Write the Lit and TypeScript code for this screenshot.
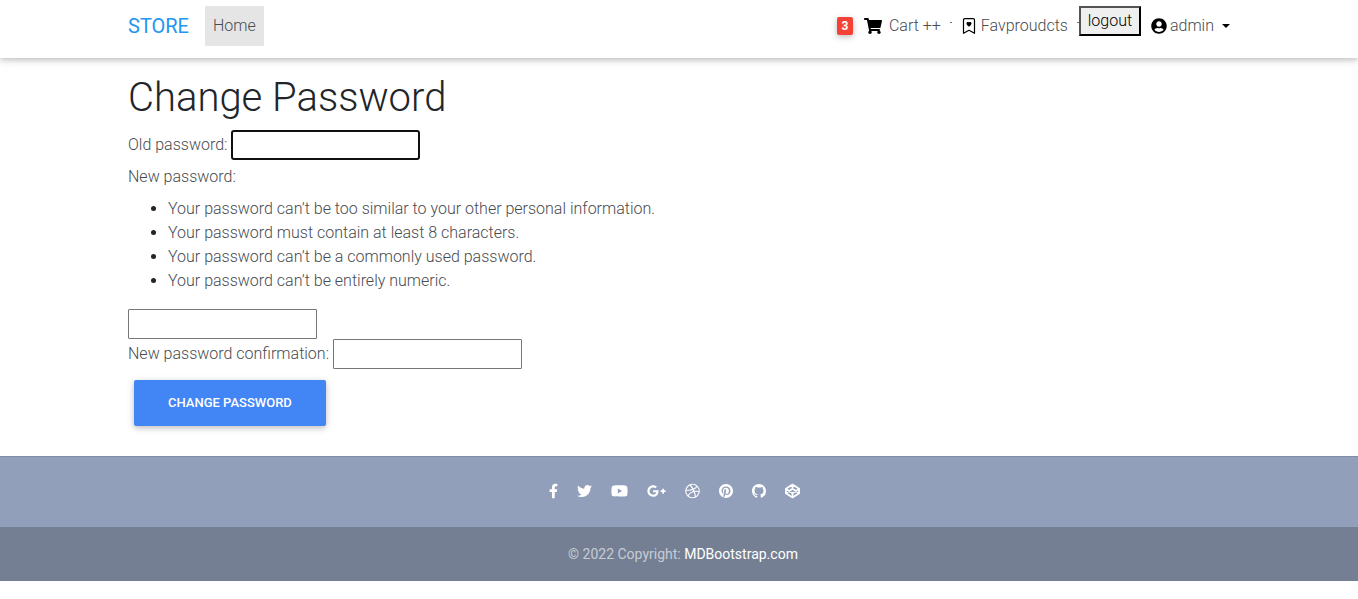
import { LitElement, html, css, svg } from "lit";
import { customElement, query } from "lit/decorators.js";

interface Social {
  name: string;
  box: string;
  size: string;
  shape: unknown;
}

const socials: Social[] = [
  {
    name: "Facebook", box: "0 0 320 512", size: "w9",
    shape: svg`<path d="M279.14 288l14.22-92.66h-88.91v-60.13c0-25.35 12.42-50.06 52.24-50.06h40.42V6.26S260.43 0 225.36 0c-73.22 0-121.08 44.38-121.08 124.72v70.62H22.89V288h81.39v224h100.17V288z"/>`,
  },
  {
    name: "Twitter", box: "0 0 512 512", size: "w15",
    shape: svg`<path d="M459.37 151.716c.325 4.548.325 9.097.325 13.645 0 138.72-105.583 298.558-298.558 298.558-59.452 0-114.68-17.219-161.137-47.106 8.447.974 16.568 1.299 25.34 1.299 49.055 0 94.213-16.568 130.274-44.832-46.132-.975-84.792-31.188-98.112-72.772 6.498.974 12.995 1.624 19.818 1.624 9.421 0 18.843-1.3 27.614-3.573-48.081-9.747-84.143-51.98-84.143-102.985v-1.299c13.969 7.797 30.214 12.67 47.431 13.319-28.264-18.843-46.781-51.005-46.781-87.391 0-19.492 5.197-37.36 14.294-52.954 51.655 63.675 129.3 105.258 216.365 109.807-1.624-7.797-2.599-15.918-2.599-24.04 0-57.828 46.782-104.934 104.934-104.934 30.213 0 57.502 12.67 76.67 33.137 23.715-4.548 46.456-13.32 66.599-25.34-7.798 24.366-24.366 44.833-46.132 57.827 21.117-2.273 41.584-8.122 60.426-16.243-14.292 20.791-32.161 39.308-52.628 54.253z"/>`,
  },
  {
    name: "YouTube", box: "0 0 576 512", size: "w17",
    shape: svg`<path d="M549.655 124.083c-6.281-23.65-24.787-42.276-48.284-48.597C458.781 64 288 64 288 64S117.22 64 74.629 75.486c-23.497 6.322-42.003 24.947-48.284 48.597-11.412 42.867-11.412 132.305-11.412 132.305s0 89.438 11.412 132.305c6.281 23.65 24.787 41.5 48.284 47.821C117.22 448 288 448 288 448s170.78 0 213.371-11.486c23.497-6.321 42.003-24.171 48.284-47.821 11.412-42.867 11.412-132.305 11.412-132.305s0-89.438-11.412-132.305zm-317.51 213.508V175.185l142.739 81.205-142.739 81.201z"/>`,
  },
  {
    name: "Google Plus", box: "0 0 640 512", size: "w19",
    shape: svg`<path d="M386.061 228.496c1.834 9.692 3.143 19.384 3.143 31.956C389.204 370.205 315.599 448 204.8 448c-106.084 0-192-85.915-192-192s85.916-192 192-192c51.864 0 95.083 18.859 128.611 50.292l-52.126 50.03c-14.145-13.621-39.028-29.599-76.485-29.599-65.484 0-118.92 54.221-118.92 121.277 0 67.056 53.436 121.277 118.92 121.277 75.961 0 104.513-54.745 108.965-82.773H204.8v-66.009h181.261zm185.406 6.437V179.2h-56.001v55.733h-55.733v56.001h55.733v55.733h56.001v-55.733H627.2v-56.001h-55.733z"/>`,
  },
  {
    name: "Dribbble", box: "0 0 512 512", size: "w15",
    shape: svg`<path d="M256 8C119.252 8 8 119.252 8 256s111.252 248 248 248 248-111.252 248-248S392.748 8 256 8zm163.97 114.366c29.503 36.046 47.369 81.957 47.835 131.955-6.984-1.477-77.018-15.682-147.502-6.818-5.752-14.041-11.181-26.393-18.617-41.614 78.321-31.977 113.818-77.482 118.284-83.523zM396.421 97.87c-3.81 5.427-35.697 48.286-111.021 76.519-34.712-63.776-73.185-116.168-79.04-124.008 67.176-16.193 137.966 1.27 190.061 47.489zm-230.48-33.25c5.585 7.659 43.438 60.116 78.537 122.509-99.087 26.313-186.36 25.934-195.834 25.809C62.38 147.205 106.678 92.573 165.941 64.62zM44.17 256.323c0-2.166.043-4.322.108-6.473 9.268.19 111.92 1.513 217.706-30.146 6.064 11.868 11.857 23.915 17.174 35.949-76.599 21.575-146.194 83.527-180.531 142.306C64.794 360.405 44.17 310.73 44.17 256.323zm81.807 167.113c22.127-45.233 82.178-103.622 167.579-132.756 29.74 77.283 42.039 142.053 45.189 160.638-68.112 29.013-150.015 21.053-212.768-27.882zm248.38 8.489c-2.171-12.886-13.446-74.897-41.152-151.033 66.38-10.626 124.7 6.768 131.947 9.055-9.442 58.941-43.273 109.844-90.795 141.978z"/>`,
  },
  {
    name: "Pinterest", box: "0 0 496 512", size: "w14",
    shape: svg`<path d="M496 256c0 137-111 248-248 248-25.6 0-50.2-3.9-73.4-11.1 10.1-16.5 25.2-43.5 30.8-65 3-11.6 15.4-59 15.4-59 8.1 15.4 31.7 28.5 56.8 28.5 74.8 0 128.7-68.8 128.7-154.3 0-81.9-66.9-143.2-152.9-143.2-107 0-163.9 71.8-163.9 150.1 0 36.4 19.4 81.7 50.3 96.1 4.7 2.2 7.2 1.2 8.3-3.3.8-3.4 5-20.3 6.9-28.1.6-2.5.3-4.7-1.7-7.1-10.1-12.5-18.3-35.3-18.3-56.6 0-54.7 41.4-107.6 112-107.6 60.9 0 103.6 41.5 103.6 100.9 0 67.1-33.9 113.6-78 113.6-24.3 0-42.6-20.1-36.7-44.8 7-29.5 20.5-61.3 20.5-82.6 0-19-10.2-34.9-31.4-34.9-24.9 0-44.9 25.7-44.9 60.2 0 22 7.4 36.8 7.4 36.8s-24.5 103.8-29 123.2c-5 21.4-3 51.6-.9 71.2C65.4 450.9 0 361.1 0 256 0 119 111 8 248 8s248 111 248 248z"/>`,
  },
  {
    name: "GitHub", box: "0 0 16 16", size: "w14",
    shape: svg`<path d="M8 0C3.58 0 0 3.58 0 8c0 3.54 2.29 6.53 5.47 7.59.4.07.55-.17.55-.38 0-.19-.01-.82-.01-1.49-2.01.37-2.53-.49-2.69-.94-.09-.23-.48-.94-.82-1.13-.28-.15-.68-.52-.01-.53.63-.01 1.08.58 1.23.82.72 1.21 1.87.87 2.33.66.07-.52.28-.87.51-1.07-1.78-.2-3.64-.89-3.64-3.95 0-.87.31-1.59.82-2.15-.08-.2-.36-1.02.08-2.12 0 0 .67-.21 2.2.82.64-.18 1.32-.27 2-.27s1.36.09 2 .27c1.53-1.04 2.2-.82 2.2-.82.44 1.1.16 1.92.08 2.12.51.56.82 1.27.82 2.15 0 3.07-1.87 3.75-3.65 3.95.29.25.54.73.54 1.48 0 1.07-.01 1.93-.01 2.2 0 .21.15.46.55.38A8.01 8.01 0 0 0 16 8c0-4.42-3.58-8-8-8z"/>`,
  },
  {
    name: "CodePen", box: "0 0 512 512", size: "w15",
    shape: svg`<path fill="none" stroke="currentColor" stroke-width="58" stroke-linejoin="round" d="M256 36L482 178V334L256 476L30 334V178ZM30 178L256 334L482 178M30 334L256 178L482 334M256 36V178M256 334V476"/>`,
  },
];

const rules = [
  "Your password can’t be too similar to your other personal information.",
  "Your password must contain at least 8 characters.",
  "Your password can’t be a commonly used password.",
  "Your password can’t be entirely numeric.",
];

@customElement("app-root")
export class AppRoot extends LitElement {
  @query("#old-password") private oldPassword!: HTMLInputElement;

  static styles = css`
    :host {
      display: block;
      font: 300 16px/24px Roboto, "Open Sans", sans-serif;
      color: #212529;
      background: #fff;
    }
    * { box-sizing: border-box; }
    a { color: inherit; text-decoration: none; }
    svg { display: block; fill: currentColor; flex: none; }
    .container {
      max-width: 1134px;
      margin: 0 auto;
      padding: 0 16px;
    }
    .navbar {
      padding: 6px 0 12px;
      box-shadow: 0 2px 5px rgba(0, 0, 0, 0.16), 0 2px 10px rgba(0, 0, 0, 0.12);
    }
    .bar, .nav, .item, .row, .social { display: flex; align-items: center; }
    .bar { justify-content: space-between; }
    .brand {
      font-size: 20px;
      font-weight: 400;
      color: #2196f3;
      margin-right: 16px;
    }
    .link { padding: 8px; }
    .active { background: rgba(0, 0, 0, 0.1); }
    .item { height: 40px; }
    .item, .link, label, .rules span { color: #484b4f; }
    .badge {
      width: 16px;
      height: 18px;
      margin-right: 11px;
      border-radius: 2px;
      background: #f44336;
      color: #fff;
      font-size: 12px;
      font-weight: 700;
      line-height: 18px;
      text-align: center;
      box-shadow: 0 2px 5px rgba(0, 0, 0, 0.16), 0 2px 10px rgba(0, 0, 0, 0.12);
    }
    .icon { color: #000; }
    .cart { width: 18px; height: 16px; margin-right: 7px; }
    .mark { width: 16px; height: 16px; margin-right: 4px; }
    .user { width: 16px; height: 16px; margin-right: 3px; }
    .tick {
      width: 2px;
      height: 1px;
      margin: 0 9px 8px 9px;
      background: #777;
    }
    .tick.end { margin-right: 0; }
    .logout {
      align-self: flex-start;
      height: 30px;
      margin-right: 10px;
      padding: 0 6px;
      min-width: 62px;
      border: 2px outset #000;
      background: #efefef;
      color: #000;
      font: inherit;
    }
    .caret {
      margin-left: 8px;
      border: 4px solid transparent;
      border-top-color: #000;
      border-bottom: 0;
    }
    h1 { margin: 0 0 8px; font-size: 40px; line-height: 48px; font-weight: 300; }
    .content { padding-top: 16px; padding-bottom: 24px; }
    .row { gap: 4px; }
    .caption { display: block; margin: 5px 0 8px; }
    .rules { margin: 0 0 16px; padding-left: 40px; }
    .field {
      display: block;
      width: 189px;
      height: 30px;
      padding: 1px 2px;
      border: 1px solid #767676;
      border-radius: 1px;
      background: #fff;
      color: #000;
      font: inherit;
    }
    .field:focus {
      outline: none;
      border: 2px solid #101010;
      border-radius: 3px;
    }
    .submit {
      display: block;
      height: 46px;
      margin: 11px 6px 6px;
      padding: 0 34px;
      border: 0;
      border-radius: 2px;
      background: #4285f4;
      color: #fff;
      font: 500 13px/20px Roboto, sans-serif;
      text-transform: uppercase;
      box-shadow: 0 2px 5px rgba(0, 0, 0, 0.16), 0 2px 10px rgba(0, 0, 0, 0.12);
    }
    footer { background: #929fba; color: #fff; }
    .social {
      justify-content: center;
      gap: 19px;
      padding: 26px 10px 28px 0;
      border-top: 1px solid #7f8ba8;
    }
    .social svg { height: 16px; }
    .w9 { width: 9px; }
    .w14 { width: 14px; }
    .w15 { width: 15px; }
    .w17 { width: 17px; }
    .w19 { width: 19px; }
    .copyright {
      padding: 16px 8px 16px 16px;
      line-height: 22px;
      font-size: 14px;
      font-weight: 400;
      text-align: center;
      background: rgba(0, 0, 0, 0.2);
      color: rgba(255, 255, 255, 0.6);
    }
    .copyright a { color: #fff; }
  `;

  firstUpdated() {
    this.oldPassword.focus();
  }

  render() {
    return html`
      <nav class="navbar">
        <div class="container bar">
          <div class="nav">
            <a class="brand" href="#">STORE</a>
            <a class="link active" href="#">Home</a>
          </div>
          <div class="nav">
            <a class="item" href="#">
              <span class="badge">3</span>
              <svg class="icon cart" viewBox="0 0 576 512" aria-hidden="true"><path d="M528.12 301.319l47.273-208C578.806 78.301 567.391 64 551.99 64H159.208l-9.166-44.81C147.758 8.021 137.93 0 126.529 0H24C10.745 0 0 10.745 0 24v16c0 13.255 10.745 24 24 24h69.883l70.248 343.435C147.325 417.1 136 435.222 136 456c0 30.928 25.072 56 56 56s56-25.072 56-56c0-15.674-6.447-29.835-16.824-40h209.647C430.447 426.165 424 440.326 424 456c0 30.928 25.072 56 56 56s56-25.072 56-56c0-22.172-12.888-41.332-31.579-50.405l5.517-24.276c3.413-15.018-8.002-29.319-23.403-29.319H218.117l-6.545-32h293.145c11.206 0 20.92-7.754 23.403-18.681z"/></svg>
              <span>Cart ++</span>
            </a>
            <span class="tick"></span>
            <a class="item" href="#">
              <svg class="icon mark" viewBox="0 0 16 16" aria-hidden="true">
                <path d="M8 4.41c1.387-1.425 4.854 1.07 0 4.277C3.146 5.48 6.613 2.986 8 4.412z"/>
                <path fill="none" stroke="currentColor" stroke-width="1.2" stroke-linejoin="round" d="M3.8.6h8.4a1.3 1.3 0 0 1 1.3 1.3V15.3L8 12.3l-5.5 3V1.9A1.3 1.3 0 0 1 3.8.6z"/>
              </svg>
              <span>Favproudcts</span>
            </a>
            <span class="tick end"></span>
            <button class="logout" type="button">logout</button>
            <a class="item" href="#">
              <svg class="icon user" viewBox="0 0 496 512" aria-hidden="true"><path d="M248 8C111 8 0 119 0 256s111 248 248 248 248-111 248-248S385 8 248 8zm0 96c48.6 0 88 39.4 88 88s-39.4 88-88 88-88-39.4-88-88 39.4-88 88-88zm0 344c-58.7 0-111.3-26.6-146.5-68.2 18.8-35.4 55.6-59.8 98.5-59.8 2.4 0 4.8.4 7.1 1.1 13 4.2 26.6 6.9 40.9 6.9 14.3 0 28-2.7 40.9-6.9 2.3-.7 4.7-1.1 7.1-1.1 42.9 0 79.7 24.4 98.5 59.8C359.3 421.4 306.7 448 248 448z"/></svg>
              <span>admin</span>
              <span class="caret"></span>
            </a>
          </div>
        </div>
      </nav>

      <main class="container content">
        <h1>Change Password</h1>
        <form @submit=${(e: Event) => e.preventDefault()}>
          <div class="row">
            <label for="old-password">Old password:</label>
            <input class="field" id="old-password" type="password" />
          </div>
          <label class="caption" for="new-password">New password:</label>
          <ul class="rules">
            ${rules.map((rule) => html`<li><span>${rule}</span></li>`)}
          </ul>
          <input class="field" id="new-password" type="password" />
          <div class="row">
            <label for="confirm-password">New password confirmation:</label>
            <input class="field" id="confirm-password" type="password" />
          </div>
          <button class="submit" type="submit">Change password</button>
        </form>
      </main>

      <footer>
        <div class="social">
          ${socials.map(
            (s) => html`<a href="#" aria-label=${s.name}><svg class=${s.size} viewBox=${s.box}>${s.shape}</svg></a>`
          )}
        </div>
        <div class="copyright">© 2022 Copyright: <a href="#">MDBootstrap.com</a></div>
      </footer>
    `;
  }
}
